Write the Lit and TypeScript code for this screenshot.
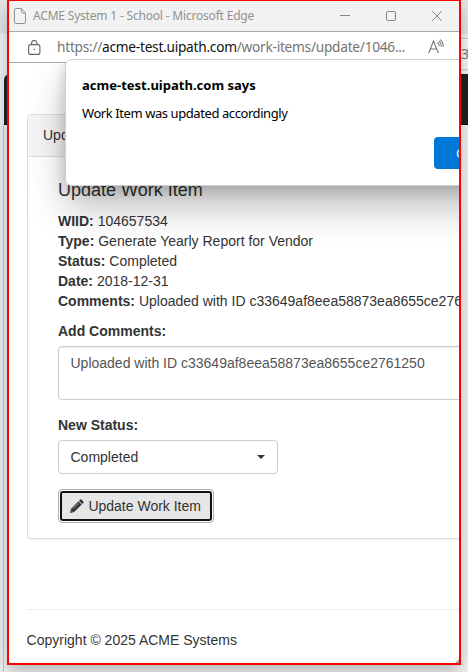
import { LitElement, html, css } from "lit";
import { customElement } from "lit/decorators.js";

@customElement("app-root")
export class AppRoot extends LitElement {
  static styles = css`
    :host {
      display: block;
      position: relative;
      width: 468px;
      height: 672px;
      overflow: hidden;
      background: #f1f1f1;
      font: 14px/20px "Liberation Sans", Arial, sans-serif;
      color: #333;
    }
    * { box-sizing: border-box; }
    .behind { display: flex; flex-direction: column; height: 100%; }
    .tabs { height: 34px; background: #e6e6e6; }
    .tools { height: 40px; background: #f5f5f5; display: flex; justify-content: flex-end; padding-top: 4px; }
    .pill {
      width: 8px; height: 32px; overflow: hidden; border: solid #ccc; border-width: 1px 0;
      background: #fafafa; color: #777; font: 14px/30px "Noto Sans", sans-serif; padding-left: 1px;
      letter-spacing: -0.5px;
    }
    .nav { height: 51px; margin-left: 4px; background: #222; border-bottom: 1px solid #080808; border-top-left-radius: 6px; }
    .rest { flex: 1; margin-left: 3px; border-left: 1px solid #ccc; background: #f5f5f5; }
    .window {
      position: absolute; left: 7px; top: 0; width: 454px; height: 665px;
      border: 2px solid #f00; border-top-width: 1px; background: #fff;
      box-shadow: 0 8px 18px rgba(0, 0, 0, .26);
    }
    .inner { display: flex; flex-direction: column; height: 100%; overflow: hidden; position: relative; }
    .title {
      height: 31px; flex: none; display: flex; align-items: center; background: #f2f2f2;
      border-bottom: 1px solid #aaa; color: #919191; padding-left: 5px;
      font: 12px/30px "Noto Sans", sans-serif;
    }
    .title span { margin-left: 7px; width: 306px; white-space: nowrap; letter-spacing: -0.19px; }
    .address {
      height: 31px; flex: none; display: flex; align-items: center; border-bottom: 1px solid #aaa;
      padding-left: 19px; background: #fff; color: #757575; position: relative; z-index: 1;
      font: 13.7px/30px "Noto Sans", sans-serif;
    }
    .url { margin-left: 16px; width: 371px; white-space: nowrap; letter-spacing: -0.26px; }
    .url b { font-weight: 400; color: #111; }
    .page { flex: 1; padding: 51px 0 0 18px; position: relative; }
    .panel {
      width: 520px; height: 425px; border: 1px solid #ddd; border-radius: 4px;
      box-shadow: 0 1px 1px rgba(0, 0, 0, .05);
    }
    .head { height: 42px; padding: 10px 15px; background: #f5f5f5; border-bottom: 1px solid #ddd; }
    .body { padding: 23px 30px; white-space: nowrap; }
    h4 { font-size: 18px; line-height: 20px; font-weight: 400; margin: 0 0 11px; }
    .label { font-weight: 700; display: block; margin-bottom: 5px; }
    .area, .select { border: 1px solid #ccc; border-radius: 4px; background: #fff; padding: 6px 12px 6px 11.5px; }
    .area { height: 54px; color: #555; box-shadow: inset 0 1px 1px rgba(0, 0, 0, .075); margin-bottom: 15px; }
    .comments { margin-top: 10px; }
    .select { width: 220px; height: 34px; display: flex; justify-content: space-between; align-items: center; }
    .caret { border: 4px solid transparent; border-top-color: #333; border-bottom: 0; }
    .button {
      width: 156px; height: 34px; margin-top: 15px; border: 1px solid #adadad; border-radius: 4px;
      background: #fff; padding: 1px;
    }
    .face {
      height: 30px; border: 2px solid #101010; border-radius: 3px; background: #e6e6e6;
      display: flex; align-items: center; padding-left: 8px; gap: 4.4px;
    }
    .foot { margin: 70px 0 0 -0.4px; border-top: 1px solid #eee; padding-top: 20px; }
    .shade {
      position: absolute; left: 56px; top: -4px; width: 448px; height: 127px; border-radius: 6px;
      box-shadow: 0 22px 36px rgba(0, 0, 0, .25), 0 4px 14px rgba(0, 0, 0, .18);
    }
    .dialog {
      position: absolute; z-index: 2; left: 56px; top: 58px; width: 448px; height: 127px;
      border: 1px solid #d0d0d0; border-radius: 7px; background: #fff; color: #000;
      padding: 15px 16px 16px; font: 13px/20px "Noto Sans", sans-serif;
      display: flex; flex-direction: column;
    }
    .host { font-weight: 700; letter-spacing: 0.01px; white-space: nowrap; }
    .msg { margin-top: 8px; white-space: nowrap; letter-spacing: -0.42px; }
    .ok {
      margin: 14px 0 0 352px; width: 70px; height: 32px; flex: none; border-radius: 4px;
      background: #0078d7; color: #fff; line-height: 32px; padding-left: 22px;
    }
    svg { flex: none; fill: none; }
    .grip { position: absolute; right: 0; bottom: 0; border: 2px solid #aaa; border-left-color: transparent; border-top-color: transparent; }
  `;

  private fields = [
    ["WIID", "104657534"],
    ["Type", "Generate Yearly Report for Vendor"],
    ["Status", "Completed"],
    ["Date", "2018-12-31"],
    ["Comments", "Uploaded with ID c33649af8eea58873ea8655ce2761250"],
  ];

  render() {
    return html`
      <div class="behind">
        <div class="tabs"></div>
        <div class="tools"><div class="pill">3</div></div>
        <div class="nav"></div>
        <div class="rest"></div>
      </div>
      <div class="window">
        <div class="inner">
          <div class="title">
            <svg width="12" height="16" viewBox="0 0 12 16" stroke="#919191"><path d="M2 .5H7.3L11.5 5V14Q11.5 15.5 10 15.5H2Q.5 15.5 .5 14V2Q.5 .5 2 .5ZM7.5 .8V3.5Q7.5 5 9 5H11.3" /></svg>
            <span>ACME System 1 - School - Microsoft Edge</span>
            <svg width="104" height="12" viewBox="0 0 104 12" stroke="#858585"><path d="M1 5.5H11" /><rect x="47.5" y="1.5" width="9" height="9" rx="1.5" /><path d="M93.3 1.3L102.7 10.7M102.7 1.3L93.3 10.7" /></svg>
          </div>
          <div class="address">
            <svg width="13" height="15" viewBox="0 0 13 15" stroke="#666" stroke-width="1.1"><rect x=".6" y="4.6" width="11.3" height="9.8" rx="2" /><path d="M3.6 4.5V3.2A2.7 2.7 0 0 1 9 3.2V4.5" /><circle cx="6.3" cy="9.5" r=".7" fill="#666" stroke="none" /></svg>
            <div class="url">https://<b>acme-test.uipath.com</b>/work-items/update/1046...</div>
            <svg width="17" height="16" viewBox="0 0 17 16" stroke="#777" stroke-width="1.1"><path d="M.7 14L5.5 2L10.3 14M2.3 10H8.7M9.5 3.5Q11.2 5 11.2 7.2M11 1.8Q13.4 4 13.3 7.8M12.2 .6Q15.4 3.2 15.2 7.8" /></svg>
          </div>
          <div class="page">
            <div class="panel">
              <div class="head">Update Work Item</div>
              <div class="body">
                <h4>Update Work Item</h4>
                ${this.fields.map(([k, v]) => html`<div><b>${k}:</b> ${v}</div>`)}
                <div class="label comments">Add Comments:</div>
                <div class="area">Uploaded with ID c33649af8eea58873ea8655ce2761250</div>
                <div class="label">New Status:</div>
                <div class="select">Completed<i class="caret"></i></div>
                <div class="button">
                  <div class="face">
                    <svg width="14" height="14" viewBox="0 0 14 14"><path fill="#333" d="M10.2.6Q10.8 0 11.5.6L13.4 2.5Q14 3.1 13.4 3.8L12.3 4.9L9.1 1.7ZM8.5 2.3L11.7 5.5L4.1 13.1L0 14L.9 9.9Z" /><path stroke="#e6e6e6" stroke-width=".6" d="M3 9.7L8.6 4.1M1.2 11.6L2.4 12.8" /></svg>
                    Update Work Item
                  </div>
                </div>
              </div>
            </div>
            <div class="foot">Copyright © 2025 ACME Systems</div>
            <div class="shade"></div>
          </div>
          <div class="dialog">
            <div class="host">acme-test.uipath.com says</div>
            <div class="msg">Work Item was updated accordingly</div>
            <div class="ok">OK</div>
          </div>
          <i class="grip"></i>
        </div>
      </div>
    `;
  }
}
